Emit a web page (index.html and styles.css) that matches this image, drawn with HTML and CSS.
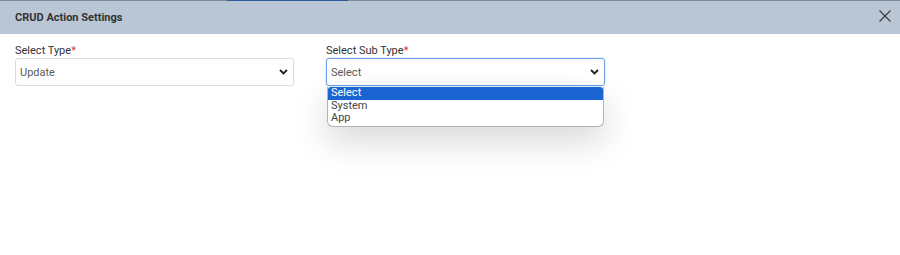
FILE: index.html
```html
<!DOCTYPE html>
<html lang="en">
<head>
  <meta charset="UTF-8">
  <meta name="viewport" content="width=device-width, initial-scale=1.0">
  <title>CRUD Action Settings</title>
  <link rel="stylesheet" href="styles.css">
</head>
<body>
  <div class="topbar">
    <span class="tab-active"></span>
  </div>

  <div class="modal">
    <div class="modal-header">
      <h2>CRUD Action Settings</h2>
      <button class="close-btn" aria-label="Close">
        <svg width="12" height="12" viewBox="0 0 12 12">
          <path d="M0.5 0.5 L11.5 11.5 M11.5 0.5 L0.5 11.5" stroke="#3d3d3d" stroke-width="1.2" fill="none"/>
        </svg>
      </button>
    </div>

    <div class="modal-body">
      <div class="form-group">
        <label>Select Type<span class="req">*</span></label>
        <div class="select">
          <span>Update</span>
          <svg class="chevron" width="9" height="6" viewBox="0 0 9 6">
            <path d="M1 1 L4.5 4.5 L8 1" stroke="#222" stroke-width="1.8" fill="none"/>
          </svg>
        </div>
      </div>

      <div class="form-group">
        <label>Select Sub Type<span class="req">*</span></label>
        <div class="select focused">
          <span>Select</span>
          <svg class="chevron" width="9" height="6" viewBox="0 0 9 6">
            <path d="M1 1 L4.5 4.5 L8 1" stroke="#222" stroke-width="1.8" fill="none"/>
          </svg>
          <ul class="dropdown">
            <li class="selected">Select</li>
            <li>System</li>
            <li>App</li>
          </ul>
        </div>
      </div>
    </div>
  </div>
</body>
</html>
```

FILE: styles.css
```css
:root {
  --header: #b9c6d6;
  --text: #333;
  --muted: #5a5a5a;
  --border: #dcdcdc;
  --focus: #6a9ee8;
  --highlight: #1b65d2;
}

* {
  box-sizing: border-box;
}

body {
  margin: 0;
  font-family: Roboto, "Liberation Sans", sans-serif;
  background: #fff;
  color: var(--text);
  width: 900px;
  height: 255px;
  overflow: hidden;
}

.topbar {
  height: 1px;
  background: #808a96;
  position: relative;
}

.tab-active {
  position: absolute;
  left: 227px;
  top: 0;
  width: 121px;
  height: 1px;
  background: #2b5e98;
}

.modal-header {
  height: 33px;
  background: var(--header);
  display: flex;
  align-items: center;
  justify-content: space-between;
  padding: 0 9px 0 15px;
}

.modal-header h2 {
  margin: 0;
  font-size: 11px;
  font-weight: 700;
  color: #333;
  padding-bottom: 1px;
}

.close-btn {
  border: none;
  background: none;
  padding: 0;
  display: flex;
  margin-top: -3px;
}

.modal-body {
  display: flex;
  gap: 32px;
  padding: 10px 15px 0;
}

.form-group {
  width: 279px;
}

label {
  display: block;
  font-size: 11px;
  color: var(--text);
  margin-bottom: 1px;
  line-height: 13px;
}

.req {
  color: #e03131;
}

.select {
  position: relative;
  height: 28px;
  border: 1px solid var(--border);
  border-radius: 3px;
  display: flex;
  align-items: center;
  justify-content: space-between;
  padding: 0 4px 0 4px;
  font-size: 11px;
  color: var(--muted);
}

.select.focused {
  border-color: var(--focus);
  box-shadow: 0 0 0 1px rgba(106, 158, 232, 0.15);
}

.chevron {
  margin-right: 1px;
}

.dropdown {
  position: absolute;
  top: 28px;
  left: 0;
  right: 0;
  margin: 0;
  padding: 0 0 1px;
  list-style: none;
  background: #fff;
  border: 1px solid #b4b4b4;
  border-top: none;
  border-radius: 0 0 6px 6px;
  box-shadow: 0 14px 34px rgba(0, 0, 0, 0.16);
  font-size: 11px;
  color: #444;
}

.dropdown li {
  height: 12.5px;
  line-height: 12.5px;
  padding: 0 3px;
}

.dropdown li.selected {
  background: var(--highlight);
  color: #fff;
  border-radius: 3px 3px 0 0;
}
```
